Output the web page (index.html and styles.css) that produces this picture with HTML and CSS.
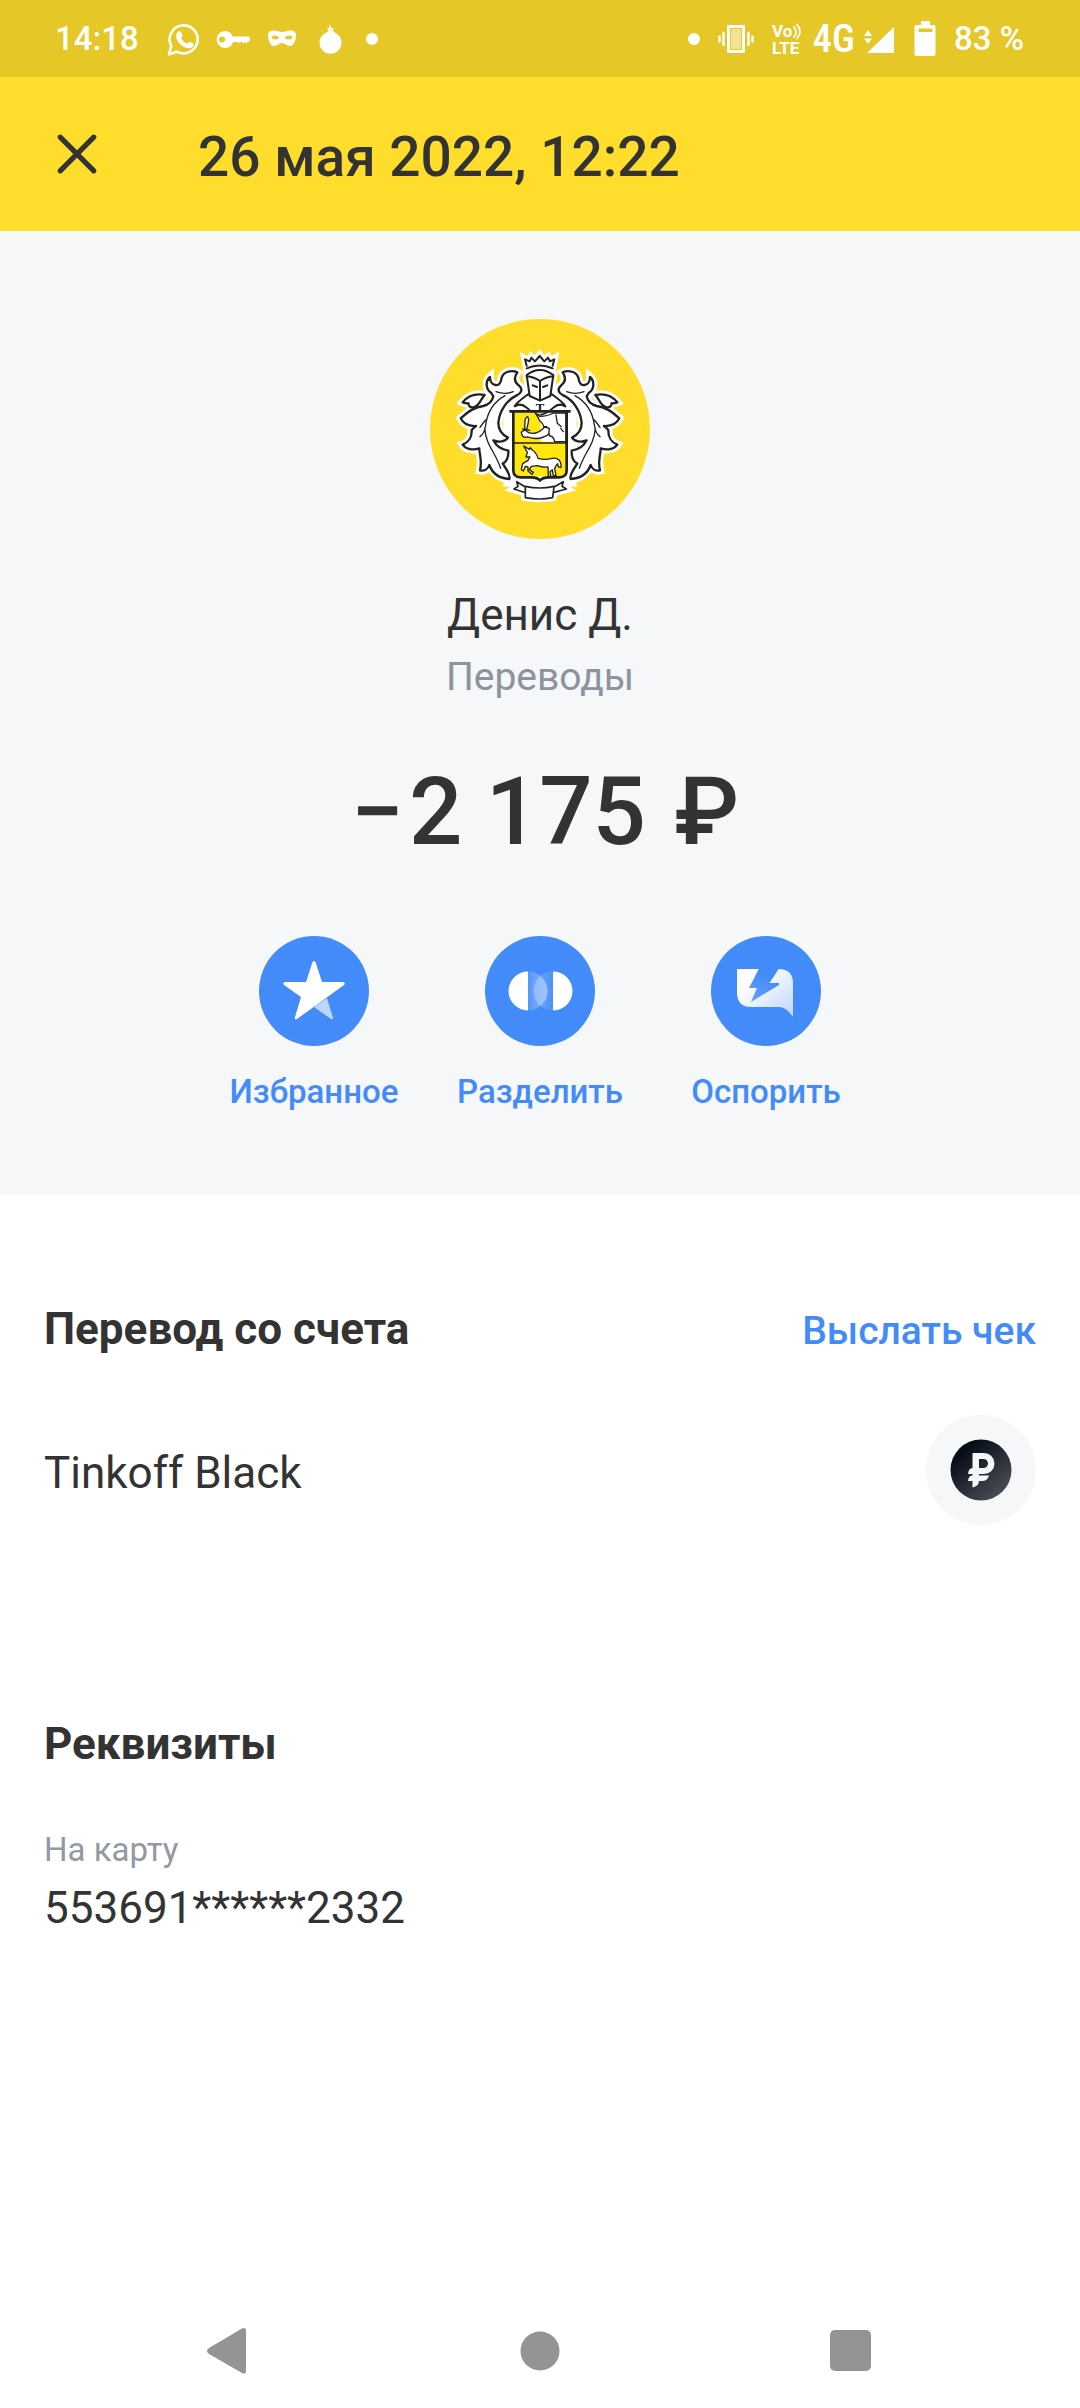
FILE: index.html
```html
<!DOCTYPE html>
<html lang="ru">
<head>
<meta charset="utf-8">
<meta name="viewport" content="width=device-width, initial-scale=1">
<title>Операция</title>
<link rel="stylesheet" href="styles.css">
</head>
<body>
<div class="status">
  <div class="status-group">
    <span class="status-time">14:18</span>
    <svg class="status-icon" viewBox="0 0 40 40" aria-hidden="true">
      <path d="M5 35.300l2.300-8.300A14 14 0 1 1 13 32.700z" fill="none" stroke="#fff" stroke-width="2.600" stroke-linejoin="round"/>
      <path d="M13.800 13c.8-1 2.600-1.200 3.200 0l1.500 3.400c.3.800-1.500 2.300-1.300 2.900 1.300 2.600 3.200 4.300 5.800 5.300.9.200 1.900-2.300 2.900-1.900l3.400 1.700c1 .6.400 2.600-.6 3.500-2.300 1.900-5 1.500-7.600.5-3.800-1.700-6.900-4.900-8.500-8.700-.8-2.400-.8-4.800 1.200-6.700z" fill="#fff"/>
    </svg>
    <svg class="status-icon" viewBox="0 0 40 40" aria-hidden="true">
      <path fill="#fff" fill-rule="evenodd" d="M12 12a8.500 8.500 0 0 1 7.800 5.500H36l1 2.500-1 3h-1.500l-1 1.500-1.500-1.500-1.500 1.500-1.500-1.500h-2l-1.500 1.500-1.500-1.500h-3.700A8.500 8.500 0 1 1 12 12zM9 17.500a3 3 0 1 0 0 6 3 3 0 0 0 0-6z"/>
    </svg>
    <svg class="status-icon" viewBox="0 0 40 40" aria-hidden="true">
      <path fill="#fff" fill-rule="evenodd" d="M6 16c0-3 2-4.500 5.500-4.500 4 0 5.500 1.500 8.500 1.500s4.500-1.500 8.500-1.500c3.500 0 5.500 1.500 5.500 4.500 0 4-1 7-3 9.500-1.500 1.800-4 2-6 .8-2-1.200-3.200-2.300-5-2.300s-3 1.100-5 2.300c-2 1.200-4.500 1-6-.8C7 23 6 20 6 16zm3.500 2c0 1.700 2 2.500 4 2.500s3.800-.8 3.500-1.500C16.500 17.500 15 16.500 13 16.500c-2 0-3 .5-3.500 1.500zm21 0c-.5-1-1.500-1.500-3.500-1.500-2 0-3.500 1-4 2.500-.3.700 1.500 1.500 3.500 1.500s4-.8 4-2.500z"/>
    </svg>
    <svg class="status-icon" viewBox="0 0 40 40" aria-hidden="true">
      <path fill="#fff" d="M17.500 11.500l-2-3 2.500 1 .5-4.500 2 4.500 2.500-1-1.500 3c1.500 1 2 2 4 3A11 11 0 1 1 13.500 14.500c2-1 3-1.500 4-3z"/>
    </svg>
    <svg class="status-dot" viewBox="0 0 24 40" aria-hidden="true"><circle cx="12" cy="20" r="6" fill="#fff"/></svg>
  </div>
  <div class="status-group">
    <svg class="status-dot" viewBox="0 0 24 40" aria-hidden="true"><circle cx="12" cy="20" r="6" fill="#fff"/></svg>
    <svg class="status-icon" viewBox="0 0 40 40" aria-hidden="true">
      <path fill="#fff" opacity=".5" d="M16 10h10v20H16z"/>
      <path fill="none" stroke="#fff" stroke-width="3" d="M13.500 7.500h15v25h-15z"/>
      <path stroke="#fff" stroke-width="2.400" stroke-linecap="round" d="M8.500 14v12M4.500 17.500v5M33.500 14v12M37.500 17.500v5"/>
    </svg>
    <svg class="status-icon" viewBox="0 0 40 40" aria-hidden="true">
      <text class="volte"><tspan x="8" y="18">Vo</tspan><tspan x="8" y="35">LTE</tspan></text>
      <path fill="none" stroke="#fff" stroke-width="1.800" stroke-linecap="round" d="M30 8q4 5 0 10M33 5.500q6 7 0 14"/>
    </svg>
    <span class="status-net">4G</span>
    <svg class="status-icon" viewBox="0 0 40 40" aria-hidden="true">
      <path fill="#fff" d="M3 34L30 8v26zM0 17l4-6 4 6zM0 19.500h8l-4 5.500z"/>
    </svg>
    <svg class="status-dot" viewBox="0 0 24 40" aria-hidden="true">
      <path fill="#fff" fill-rule="evenodd" d="M8 2h9v4h3.500q2 0 2 2v27q0 2-2 2h-17q-2 0-2-2V8q0-2 2-2H8zM5.500 9.500v3.500h14V9.500z"/>
    </svg>
    <span class="status-battery">83 %</span>
  </div>
</div>

<header class="topbar">
  <button class="close" type="button" aria-label="Закрыть">
    <svg viewBox="0 0 40 40" aria-hidden="true"><path d="M4 4l32 32M36 4L4 36" stroke="#333" stroke-width="5" stroke-linecap="round"/></svg>
  </button>
  <h1 class="title">26 мая 2022, 12:22</h1>
</header>

<main class="content">
  <section class="hero">
    <svg class="avatar" viewBox="30 27 660 660" role="img" aria-label="Тинькофф">
      <defs>
        <g id="mantle">
          <path d="M202 82C185 74 160 80 155 98C153 112 148 122 136 120C126 119 120 108 120 96C106 108 106 132 124 144L130 154C127 168 120 178 100 183C82 185 58 195 32 220C42 240 60 244 78 243C72 248 68 250 65 256C66 275 56 292 38 299C48 314 70 316 88 310C86 322 98 342 90 376C103 379 114 372 118 360C126 382 146 400 178 402C183 390 166 368 158 356C170 350 176 334 175 317C152 314 138 302 130 286C146 293 166 290 174 278C154 268 145 254 145 234C148 196 172 164 200 151C217 143 218 131 207 122C192 110 192 96 202 82z"/>
          <path d="M38 172C56 150 78 145 104 150C94 157 90 184 70 187C60 188 54 182 56 175C50 175 44 175 38 172z"/>
        </g>
        <g id="centre-shapes">
          <path d="M80 64L76 42L89 48L94 38L105 48L119 32L133 48L144 38L150 48L162 42L158 64Q119 52 80 64z"/>
          <path d="M80 88Q119 60 160 88L150 154L120 168L90 154z"/>
          <path d="M87 145Q60 160 42 183L35 198H205L198 183Q180 160 153 145z"/>
          <path d="M36 198H204Q200 205 200 215V375Q200 397 178 397H150Q128 397 120 407Q112 397 90 397H62Q40 397 40 375V215Q40 205 36 198z"/>
          <path d="M50 410L76 424H162L190 410L186 424L199 432L162 442L158 456Q119 464 76 456V442L42 432L54 424z"/>
        </g>
      </defs>
      <circle cx="360" cy="357" r="330" fill="#ffdd2d"/>
      <g fill="#fff" stroke="#fff" stroke-width="24" stroke-linejoin="miter" stroke-miterlimit="3">
        <use href="#mantle" transform="translate(90 105)"/>
        <use href="#mantle" transform="translate(630 105) scale(-1 1)"/>
        <use href="#centre-shapes" transform="translate(240 105)"/>
      </g>
      <path fill="#fff" d="M250 290h220v240H250z"/>
      <g id="mantle-lines" fill="none" stroke="#222" stroke-width="7" stroke-linejoin="round" stroke-linecap="round" transform="translate(90 105)">
        <use href="#mantle"/>
        <path stroke-width="4" d="M190 140Q165 150 138 140M165 152Q115 180 107 240Q104 265 90 275M107 225Q98 235 90 247M104 250C108 300 135 320 152 370"/>
      </g>
      <use href="#mantle-lines" transform="translate(720 0) scale(-1 1)"/>
      <g transform="translate(240 105)" fill="none" stroke="#222" stroke-width="6" stroke-linejoin="round" stroke-linecap="round">
        <path d="M80 62L75 43L89 49L94 38L105 49L119 33L133 49L144 38L150 49L163 43L158 62"/>
        <path d="M80 70Q119 53 158 70"/>
        <path fill="#fff" d="M87 146C68 160 52 170 44 184Q62 172 80 188Q98 206 120 210Q142 206 160 188Q178 172 196 184C188 170 172 160 153 146"/>
        <path fill="#fff" d="M80 90Q119 60 160 90L151 153L120 167L89 153z"/>
        <path d="M80 94Q102 96 120 108Q138 96 160 94M120 108V165"/>
        <path stroke-width="6" d="M98 121l13 5M142 121l-13 5"/>
        <path fill="#ffe60f" stroke="none" d="M42 202H108L122 211V290H198V378Q198 394 178 394H120L62 394Q42 394 42 378z"/>
        <path fill="#fff" stroke-width="4" d="M106 204Q112 212 118 226Q130 236 132 246L140 244V252L150 274Q160 272 164 290H198V204H160Q142 214 120 214z"/>
        <path fill="#fff" stroke-width="4" d="M64 262L74 254L86 263Q110 272 134 246L148 250L146 268Q116 288 84 276L74 277Q66 275 64 262z"/>
        <path fill="#fff" stroke-width="4" d="M74 252L75 225Q80 214 83 215Q88 222 85 232L80 253zM68 252L89 256"/>
        <path stroke-width="4" d="M168 210L172 235L184 245M182 250L190 260M42 294H198"/>
        <path fill="#fff" stroke-width="4" d="M71 303L88 313L91 308L96 315Q108 320 114 340Q134 346 152 341Q168 336 178 346Q186 358 182 368Q174 368 173 356Q168 360 164 370L168 392H160L157 374L150 380L152 394H145L144 366Q128 368 112 362L94 364L88 374L100 382L96 388L84 378L84 366L76 364L70 378L64 374L68 356L84 346L90 336L78 336L82 322z"/>
        <path stroke-width="8" stroke-linejoin="miter" stroke-linecap="butt" d="M28 199H212M40 200V375Q40 397 62 397H94Q112 397 120 406Q128 397 146 397H178Q200 397 200 375V200"/>
        <path fill="#fff" stroke-width="5" d="M76 424Q119 434 162 424L158 458Q119 466 76 458zM76 426L50 410L54 424L42 432L72 442M162 426L190 410L186 424L199 432L162 442"/>
        <text class="crest-letter" x="120" y="200" text-anchor="middle">T</text>
      </g>
    </svg>
    <h2 class="payee">Денис Д.</h2>
    <p class="category">Переводы</p>
    <p class="amount"><span class="sign">−</span>2 175 <span class="currency">₽</span></p>
    <div class="actions">
      <button class="action" type="button">
        <svg class="action-icon" viewBox="0 0 110 110" aria-hidden="true">
          <circle cx="55" cy="55" r="55" fill="#428bf9"/>
          <path d="M55 71L68 62L74 82Q74 84 72 83z" fill="#bdd6fd"/>
          <path d="M53.500 26Q55 24 56.500 26L63 46H84Q87 47 85 49L38 83Q35 84 36 81L42 61L25 49Q23 47 26 46H47z" fill="#fff"/>
        </svg>
        <span>Избранное</span>
      </button>
      <button class="action" type="button">
        <svg class="action-icon" viewBox="0 0 110 110" aria-hidden="true">
          <defs>
            <linearGradient id="fade-right"><stop offset="0" stop-color="#fff" stop-opacity=".1"/><stop offset="1" stop-color="#fff" stop-opacity=".42"/></linearGradient>
            <linearGradient id="fade-left"><stop offset="0" stop-color="#fff" stop-opacity=".3"/><stop offset="1" stop-color="#fff" stop-opacity=".05"/></linearGradient>
          </defs>
          <circle cx="55" cy="55" r="55" fill="#428bf9"/>
          <path d="M43 35.500a19.500 19.500 0 0 0 0 39zM68 35.500a19.500 19.500 0 0 1 0 39z" fill="#fff"/>
          <path d="M43 35.500a19.500 19.500 0 0 1 0 39z" fill="url(#fade-right)"/>
          <path d="M68 35.500a19.500 19.500 0 0 0 0 39z" fill="url(#fade-left)"/>
        </svg>
        <span>Разделить</span>
      </button>
      <button class="action" type="button">
        <svg class="action-icon" viewBox="0 0 110 110" aria-hidden="true">
          <defs>
            <linearGradient id="bubble" x1="0" y1="0" x2="1" y2="1"><stop offset=".25" stop-color="#fff"/><stop offset="1" stop-color="#bdd6fd"/></linearGradient>
            <linearGradient id="bolt" x1=".7" y1="0" x2=".3" y2="1"><stop offset=".2" stop-color="#428bf9"/><stop offset="1" stop-color="#619efa"/></linearGradient>
          </defs>
          <circle cx="55" cy="55" r="55" fill="#428bf9"/>
          <path d="M26 33H69Q82 34 82 47V81Q76 72 69 71H40Q27 71 26 58z" fill="url(#bubble)"/>
          <path d="M48 32.500L38 52H46L40 66L68 49V47H58.500L68 32.500z" fill="url(#bolt)"/>
        </svg>
        <span>Оспорить</span>
      </button>
    </div>
  </section>

  <section class="source">
    <div class="section-head">
      <h2 class="section-title">Перевод со счета</h2>
      <a class="receipt" href="#receipt">Выслать чек</a>
    </div>
    <div class="account">
      <span class="account-name">Tinkoff Black</span>
      <svg class="account-icon" viewBox="0 0 110 110" aria-hidden="true">
        <defs><linearGradient id="coin" x1=".2" y1=".2" x2=".8" y2=".9"><stop offset="0" stop-color="#060d17"/><stop offset="1" stop-color="#484c54"/></linearGradient></defs>
        <circle cx="55" cy="55" r="55" fill="#f5f7f8"/>
        <circle cx="55" cy="55" r="30.500" fill="url(#coin)"/>
        <path fill="#f5f7f8" fill-rule="evenodd" d="M46.500 38H58a10.500 10.500 0 0 1 0 21H53v1.500h10q-1.500 5.500-7 5.500h-3q0 5-6.500 6.500V66H42q.5-5.500 4.500-5.500V59H42q.5-6 4.500-6zM53 44v9h4.500a4.500 4.500 0 0 0 0-9z"/>
      </svg>
    </div>
  </section>

  <section class="details">
    <h2 class="section-title">Реквизиты</h2>
    <dl class="detail">
      <dt>На карту</dt>
      <dd>553691******2332</dd>
    </dl>
  </section>
</main>

<nav class="navbar" aria-label="Система">
  <button class="nav-button" type="button" aria-label="Назад">
    <svg viewBox="0 0 48 48" aria-hidden="true"><path d="M5 21L38 1.500Q42 0 42 4V44Q42 48 38 46L5 27Q1 24 5 21z" fill="#949494"/></svg>
  </button>
  <button class="nav-button" type="button" aria-label="Домой">
    <svg viewBox="0 0 48 48" aria-hidden="true"><circle cx="24" cy="24" r="19.500" fill="#949494"/></svg>
  </button>
  <button class="nav-button" type="button" aria-label="Недавние">
    <svg viewBox="0 0 48 48" aria-hidden="true"><rect x="2" y="3" width="41" height="41" rx="5" fill="#949494"/></svg>
  </button>
</nav>
</body>
</html>
```
FILE: styles.css
```css
* {
  box-sizing: border-box;
}

body {
  margin: 0;
  min-height: 100vh;
  display: flex;
  flex-direction: column;
  background: #fff;
  color: #333;
  font-family: Roboto, "Noto Sans", sans-serif;
}

h1, h2, p, dl, dd {
  margin: 0;
}

button {
  padding: 0;
  border: 0;
  background: none;
  font: inherit;
  cursor: pointer;
}

svg {
  display: block;
}

/* Status bar */
.status {
  display: flex;
  justify-content: space-between;
  align-items: center;
  height: 77px;
  padding: 0 56px 0 55px;
  background: #e5c728;
  color: #fff;
  font-size: 33px;
  font-weight: 500;
  line-height: 40px;
}

.status-group {
  display: flex;
  align-items: center;
  gap: 9px;
}

.status-time {
  margin-right: 16px;
}

.status-icon {
  width: 40px;
  height: 40px;
}

.status-dot {
  width: 24px;
  height: 40px;
}

.status-net {
  font-family: "Roboto Condensed", "Liberation Sans Narrow", Roboto, sans-serif;
  font-size: 39px;
  font-weight: 500;
}

.status-battery {
  margin-left: 8px;
}

.volte {
  fill: #fff;
  font-family: Roboto, sans-serif;
  font-size: 17px;
  font-weight: 700;
}

/* Header */
.topbar {
  display: flex;
  align-items: center;
  gap: 100px;
  height: 154px;
  padding: 0 56px;
  background: #ffdd2d;
}

.close svg {
  width: 42px;
  height: 42px;
}

.title {
  padding-top: 6px;
  font-size: 55px;
  font-weight: 500;
  line-height: 64px;
}

.content {
  flex: 1;
}

/* Operation summary */
.hero {
  display: flex;
  flex-direction: column;
  align-items: center;
  padding: 88px 44px 83px;
  background: #f5f7f8;
}

.avatar {
  width: 220px;
  height: 220px;
}

.crest-letter {
  fill: #222;
  stroke: none;
  font-family: "DejaVu Serif", serif;
  font-size: 34px;
  font-weight: 700;
}

.payee {
  margin-top: 50px;
  font-size: 44px;
  font-weight: 400;
  line-height: 52px;
}

.category {
  margin-top: 13px;
  color: #8b949e;
  font-size: 39px;
  line-height: 46px;
}

.amount {
  margin-top: 57px;
  padding-left: 10px;
  font-size: 94px;
  font-weight: 500;
  line-height: 110px;
}

.sign {
  margin-right: 5px;
}

.currency {
  margin-left: 5px;
}

.actions {
  display: grid;
  grid-template-columns: repeat(3, 226px);
  margin-top: 69px;
}

.action {
  display: flex;
  flex-direction: column;
  align-items: center;
  gap: 26px;
  color: #428bf9;
  font-size: 33px;
  font-weight: 500;
  line-height: 40px;
}

.action-icon {
  width: 110px;
  height: 110px;
}

/* Source account */
.source {
  padding: 108px 44px 0;
}

.section-head {
  display: flex;
  justify-content: space-between;
  align-items: baseline;
}

.section-title {
  font-size: 44px;
  font-weight: 700;
  line-height: 52px;
}

.receipt {
  color: #428bf9;
  font-size: 39px;
  font-weight: 500;
  line-height: 46px;
  text-decoration: none;
}

.account {
  display: flex;
  justify-content: space-between;
  align-items: center;
  margin-top: 60px;
}

.account-name {
  padding-top: 6px;
  font-size: 44px;
  line-height: 52px;
}

.account-icon {
  width: 110px;
  height: 110px;
}

/* Requisites */
.details {
  padding: 193px 44px 60px;
}

.detail {
  margin-top: 60px;
}

.detail dt {
  color: #9299a2;
  font-size: 33px;
  line-height: 40px;
}

.detail dd {
  margin-top: 12px;
  font-size: 44px;
  line-height: 52px;
}

/* System navigation */
.navbar {
  display: flex;
  justify-content: center;
  gap: 264px;
  height: 115px;
}

.nav-button svg {
  width: 48px;
  height: 48px;
}
```
